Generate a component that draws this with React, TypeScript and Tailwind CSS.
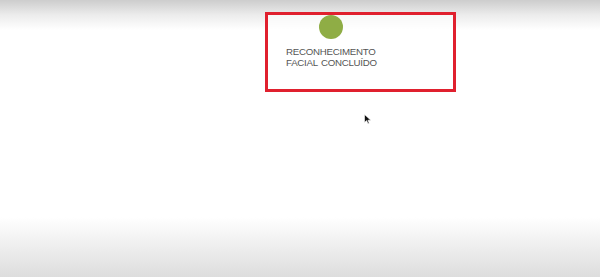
import React from 'react';

/**
 * FaceCheckNotice
 * Confirmation card shown after facial recognition completes
 */
const FaceCheckNotice: React.FC = () => {
  return (
    <div className="relative w-[191px] h-[80px] border-[3px] border-[#e0202e] bg-white/60">
      {/* Status dot */}
      <div className="ml-[51px] w-[24px] h-[24px] rounded-full bg-[#8fad45]" />

      {/* Label */}
      <p
        className="mt-[7px] ml-[18px] text-[9.7px] leading-[11px] tracking-[-0.25px] [word-spacing:1px] text-[#555555]"
        style={{ fontFamily: '"Liberation Sans", Arial, sans-serif' }}
      >
        RECONHECIMENTO
        <br />
        FACIAL CONCLUÍDO
      </p>
    </div>
  );
};

export default function App() {
  return (
    <div className="relative w-[600px] h-[277px] overflow-hidden bg-white">
      {/* Top shade */}
      <div className="absolute inset-x-0 top-0 h-[30px] bg-gradient-to-b from-[#cdcdcd] via-[#ececec] to-white" />
      {/* Bottom shade */}
      <div className="absolute inset-x-0 bottom-0 h-[60px] bg-gradient-to-b from-white to-[#dddddd]" />

      <div className="relative pt-[12px] pl-[265px]">
        <FaceCheckNotice />
      </div>

      {/* Mouse pointer */}
      <svg
        className="absolute left-[364px] top-[114px]"
        width="8"
        height="11"
        viewBox="0 0 8 11"
      >
        <path d="M0.5 0.5 L0.5 8.5 L2.6 6.6 L4 9.8 L5.2 9.3 L3.9 6.2 L6.8 6.2 Z" fill="#111" stroke="#fff" strokeWidth="0.6" />
      </svg>
    </div>
  );
}
